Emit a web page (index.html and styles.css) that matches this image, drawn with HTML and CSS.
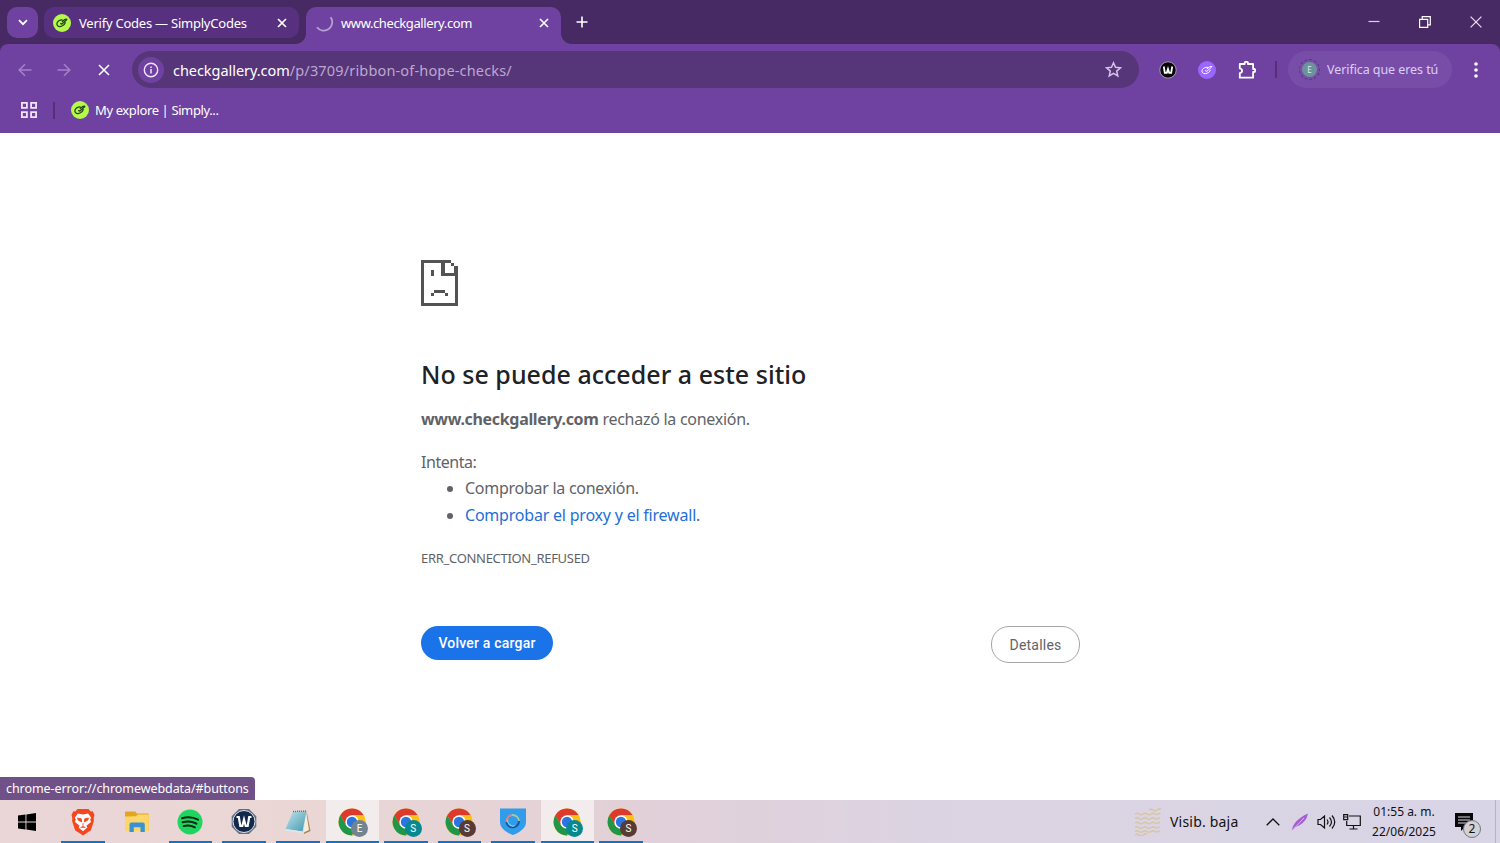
FILE: index.html
```html
<!DOCTYPE html>
<html lang="es">
<head>
  <meta charset="UTF-8">
  <meta name="viewport" content="width=device-width, initial-scale=1.0">
  <title>www.checkgallery.com</title>
  <link rel="stylesheet" href="styles.css">
</head>
<body>

  <!-- shared icons -->
  <svg class="defs" width="0" height="0">
    <symbol id="simply" viewBox="0 0 18 18">
      <circle cx="9" cy="9" r="9" fill="#b4f94c"/>
      <path d="M9.600 5.800C6.400 5.600 3.700 7.800 3.900 10.300c.2 2.200 2.900 2.800 5.100 1.700 2-.9 3.100-2.200 3.600-3.900M7.200 9.300l1.700.8 5.300-4.900M8.800 7.700l3-2.200 2.400-.3" fill="none" stroke="#26481a" stroke-width="1.300" stroke-linejoin="round"/>
    </symbol>
    <symbol id="close" viewBox="0 0 10 10">
      <path d="M1 1l8 8M9 1L1 9" fill="none" stroke="currentColor" stroke-width="1.7"/>
    </symbol>
    <symbol id="chrome" viewBox="0 0 28 28">
      <circle cx="14" cy="14" r="13.5" fill="#fbc116"/>
      <path d="M14 14L8.2 17.4 2.3 7.3A13.5 13.5 0 0 1 25.7 7.3H14z" fill="#dc3a2c"/>
      <path d="M2.3 7.3L8.2 17.4 14 20.7 19.8 17.4 14 27.5A13.5 13.5 0 0 1 2.3 7.3z" fill="#1f9648"/>
      <path d="M14 7.3h11.7A13.5 13.5 0 0 1 14 27.5l5.8-10.1z" fill="#fbc116"/>
      <circle cx="14" cy="14" r="6.7" fill="#fff"/>
      <circle cx="14" cy="14" r="5.2" fill="#2b74e2"/>
    </symbol>
  </svg>

  <header class="browser">
    <div class="tabstrip">
      <div class="tab-search">
        <svg width="10" height="7" viewBox="0 0 10 7"><path d="M1 1.2l4 4 4-4" fill="none" stroke="#fff" stroke-width="1.8"/></svg>
      </div>
      <div class="tab">
        <svg class="favicon" width="18" height="18"><use href="#simply"/></svg>
        <span class="tab-title t-verify">Verify Codes — SimplyCodes</span>
        <svg class="tab-close" width="10" height="10"><use href="#close"/></svg>
      </div>
      <div class="tab active">
        <svg class="favicon" width="18" height="18" viewBox="0 0 18 18"><path d="M15.600 3.200A7.500 7.500 0 0 1 2 13.200" fill="none" stroke="#b79fd0" stroke-width="1.8"/></svg>
        <span class="tab-title t-check">www.checkgallery.com</span>
        <svg class="tab-close" width="10" height="10"><use href="#close"/></svg>
      </div>
      <svg class="new-tab" width="12" height="12" viewBox="0 0 12 12"><path d="M6 .5v11M.5 6h11" stroke="#fff" stroke-width="1.6"/></svg>
      <div class="window-buttons">
        <svg width="12" height="12" viewBox="0 0 12 12"><path d="M.5 5.5h11" stroke="#e5c8f3" stroke-width="1.2"/></svg>
        <svg width="12" height="12" viewBox="0 0 12 12"><path d="M.6 3.3h8.1v8.1H.6zM3.2 3.3V.7h8.1v8.1H8.7" fill="none" stroke="#fff" stroke-width="1.2"/></svg>
        <svg width="12" height="12" viewBox="0 0 12 12"><path d="M.6.6l10.8 10.8M11.4.6L.6 11.4" stroke="#f2dff9" stroke-width="1.2"/></svg>
      </div>
    </div>

    <div class="toolbar">
      <div class="nav">
        <svg width="14" height="14" viewBox="0 0 14 14"><path d="M13.5 7H1.5M7 1.2L1.2 7 7 12.8" fill="none" stroke="#a581cb" stroke-width="1.5"/></svg>
        <svg width="14" height="14" viewBox="0 0 14 14"><path d="M.5 7h12M7 1.2L12.8 7 7 12.8" fill="none" stroke="#a581cb" stroke-width="1.5"/></svg>
        <svg width="12" height="12" viewBox="0 0 12 12"><path d="M1 1l10 10M11 1L1 11" stroke="#fff" stroke-width="1.6"/></svg>
      </div>
      <div class="omnibox">
        <div class="site-info">
          <svg width="16" height="16" viewBox="0 0 16 16"><circle cx="8" cy="8" r="6.7" fill="none" stroke="#f1e4fa" stroke-width="1.4"/><path d="M8 7v4.4M8 4.4v1.6" stroke="#f1e4fa" stroke-width="1.5"/></svg>
        </div>
        <span class="url"><b>checkgallery.com</b>/p/3709/ribbon-of-hope-checks/</span>
        <svg class="star" width="17" height="17" viewBox="0 0 17 17"><path d="M8.5 1.8l2 4.5 4.9.5-3.7 3.3 1.1 4.8-4.3-2.5-4.3 2.5 1.1-4.8L1.6 6.8l4.9-.5z" fill="none" stroke="#d6c2e6" stroke-width="1.5"/></svg>
      </div>
      <div class="extensions">
        <svg width="18" height="18" viewBox="0 0 18 18"><circle cx="9" cy="9" r="8.2" fill="#08080a" stroke="#b3a3c2" stroke-width=".9"/><path d="M4.8 5.5l1 6.300h2L9 8l1.200 3.800h2l1-6.300" fill="none" stroke="#fff" stroke-width="1.8"/></svg>
        <svg width="18" height="18" viewBox="0 0 18 18"><circle cx="9" cy="9" r="9" fill="#9a66ff"/><path d="M10 6.4C7 5.8 4 7.8 4 10.2c0 2.3 2.8 3.1 5.2 2 2-.9 2.8-2 3.2-3.3M7 9.6l1.8.8 5.2-4.8M8.6 8.2l3-2.4 2.6-.4" fill="none" stroke="#fff" stroke-width="1"/></svg>
        <svg class="puzzle" width="19" height="20" viewBox="0 0 19 20"><path d="M1.800 4h4.900V2.600q0-.8.800-.800h1.600q.8 0 .8.800V4h5.200v5h1.200q.8 0 .8.800v1.400q0 .8-.8.800h-1.200v5.700H1.800v-4.500q2.300-.5 2.300-2.400T1.800 8.400z" fill="none" stroke="#fff" stroke-width="1.800" stroke-linejoin="round"/></svg>
      </div>
      <span class="divider"></span>
      <div class="profile">
        <span class="profile-ring"><span class="profile-pic">E</span></span>
        <span class="profile-text">Verifica que eres tú</span>
      </div>
      <svg class="kebab" width="4" height="16" viewBox="0 0 4 16" fill="#fff"><circle cx="2" cy="2" r="1.8"/><circle cx="2" cy="8" r="1.8"/><circle cx="2" cy="14" r="1.8"/></svg>
    </div>

    <div class="bookmarks">
      <svg width="16" height="16" viewBox="0 0 16 16" fill="none" stroke="#f1e3fa" stroke-width="1.8"><path d="M.9.9h5v5h-5zM10.1.9h5v5h-5zM.9 10.1h5v5h-5zM10.1 10.1h5v5h-5z"/></svg>
      <span class="divider"></span>
      <svg class="favicon" width="18" height="18"><use href="#simply"/></svg>
      <span class="bookmark-text">My explore | Simply...</span>
    </div>
  </header>

  <main class="page">
    <div class="error">
      <svg class="sad-page" width="37" height="46" viewBox="0 0 37 46" fill="#535353">
        <path d="M0 0h30v3H24v10h12V7h1v39H0zM3 3v40h31V16H20V3z" fill-rule="evenodd"/>
        <path d="M30 3h3v3h-3zM33 6h4v8h-4z"/>
        <path d="M10 10h3v6h-3zM13 30h11v3H13zM10 33h3v3h-3zM24 33h3v3h-3z"/>
      </svg>
      <h1>No se puede acceder a este sitio</h1>
      <p class="summary"><strong>www.checkgallery.com</strong> <span>rechazó la conexión.</span></p>
      <p class="try">Intenta:</p>
      <ul>
        <li><span class="li-1">Comprobar la conexión.</span></li>
        <li><span class="li-2"><a href="#buttons">Comprobar el proxy y el firewall</a>.</span></li>
      </ul>
      <p class="code">ERR_CONNECTION_REFUSED</p>
      <div class="buttons">
        <button class="reload">Volver a cargar</button>
        <button class="details">Detalles</button>
      </div>
    </div>
    <div class="status"><span>chrome-error://chromewebdata/#buttons</span></div>
  </main>

  <footer class="taskbar">
    <div class="start">
      <svg width="18" height="18" viewBox="0 0 18 18"><path d="M0 2.600l7.500-1.100v7.100H0zM8.400 1.400L18 0v8.600H8.400zM0 9.400h7.500v7.100L0 15.400zM8.400 9.400H18V18l-9.600-1.400z"/></svg>
    </div>
    <div class="apps">
      <div class="app open">
        <svg width="24" height="28" viewBox="0 0 24 28">
          <path d="M6.5 1h11l2.200 2.500 2-.3L23.500 7l-.8 3 .2 3-3 9.200L12 27.500l-7.900-5.300L1.100 13l.2-3L.5 7l1.800-3.800 2 .3z" fill="#f4471e"/>
          <path d="M12 6.500l5.200-1 3 4.300-1 1.700.8 2.500-4.600 3.700 1 1.900L12 23.200l-4.400-3.600 1-1.900L4 14l.8-2.500-1-1.700 3-4.300z" fill="#fff"/>
          <path d="M6.500 10l3.800.8.400 3.200-3.400-1.800zM17.500 10l-3.800.8-.4 3.200 3.400-1.800zM12 15v3M9.500 19.700l2.500-1.300 2.500 1.300" fill="#f4471e" stroke="#f4471e" stroke-width=".8"/>
        </svg>
      </div>
      <div class="app">
        <svg width="24" height="22" viewBox="0 0 24 22"><path d="M0 1.200Q0 .5.700.5h9.600l1.600 2H23q.8 0 .8.800V20H0z" fill="#e2a51d"/><path d="M0 5.500l11-.2 1.600-1.800h11.200V20H0z" fill="#fcd66b"/><path d="M4.500 21v-7.500q0-2 2-2h11.300q2 0 2 2V21H15.500v-4.800h-6.700V21z" fill="#3a92d6"/></svg>
      </div>
      <div class="app open">
        <svg width="26" height="26" viewBox="0 0 26 26"><circle cx="13" cy="13" r="12.500" fill="#1ed65f"/><path d="M5 9.200c5-1.500 11.500-1 16 1.500M5.700 13.300c4.500-1.300 9.800-.8 13.700 1.400M6.500 17.100c3.800-1 8-.6 11.400 1.200" fill="none" stroke="#0c2714" stroke-width="2" stroke-linecap="round"/></svg>
      </div>
      <div class="app open">
        <svg width="26" height="27" viewBox="0 0 26 27"><path d="M8 1h10l7.300 7.300v10.400L18 26H8L.7 18.700V8.300z" fill="#606f84"/><circle cx="13" cy="13.500" r="11" fill="#12294b" stroke="#e3e6ec" stroke-width="1"/><path d="M5.500 9h2.300L9.300 18h2L13 11.500 14.700 18h2L18.200 9h2.300" fill="none" stroke="#fff" stroke-width="2.200"/></svg>
      </div>
      <div class="app open">
        <svg width="26" height="26" viewBox="0 0 26 26"><defs><linearGradient id="note" x2="1" y2="1"><stop stop-color="#c3e6ed"/><stop offset="1" stop-color="#4399b1"/></linearGradient></defs><path d="M21.500 2L25.500 22 19 25z" fill="#a8864c"/><path d="M21 2l3 19-5.500 2.500z" fill="#f4eee0"/><path d="M8 2.500L21.500 2 17.500 22.500.500 20z" fill="url(#note)"/><path d="M.500 20l17 2.500-.3 1.500L1 21.500z" fill="#dbe9eb"/><path d="M8 2.500L21.500 2" stroke="#6b7378" stroke-width="1.500" stroke-dasharray="1 1"/></svg>
      </div>
      <div class="app open focused"><svg width="28" height="28"><use href="#chrome"/></svg><span class="badge gray">E</span></div>
      <div class="app open"><svg width="28" height="28"><use href="#chrome"/></svg><span class="badge teal">S</span></div>
      <div class="app open"><svg width="28" height="28"><use href="#chrome"/></svg><span class="badge brown">S</span></div>
      <div class="app open">
        <svg width="26" height="27" viewBox="0 0 26 27"><path d="M0 .5h26V14c0 6-6 10.500-13 13C6 24.500 0 20 0 14z" fill="#319ce9"/><path d="M6.500 14a6.500 6.500 0 0 1 6-7" fill="none" stroke="#eb8571" stroke-width="1.800"/><path d="M12 7a6.500 6.500 0 0 1 7 7" fill="none" stroke="#a5c99a" stroke-width="1.800"/><path d="M19 13a6.300 6.300 0 0 1-12.500 1" fill="none" stroke="#10559e" stroke-width="2"/><path d="M8 11.500a5 5 0 0 0 7 6" fill="none" stroke="#7fd4ed" stroke-width="1.200"/></svg>
      </div>
      <div class="app open focused"><svg width="28" height="28"><use href="#chrome"/></svg><span class="badge teal">S</span></div>
      <div class="app open"><svg width="28" height="28"><use href="#chrome"/></svg><span class="badge brown">S</span></div>
    </div>

    <div class="tray">
      <svg class="haze" width="28" height="28" viewBox="0 0 28 28" fill="none" stroke="#d6c6a4" stroke-width="1.500"><path d="M15 2q2-1.500 4 0t4 0 4-1M1 6q2-1.500 4 0t4 0 4 0 4 0 4 0 5-1M1 10.500q2-1.500 4 0t4 0 4 0 4 0 4 0 5-1M1 15q2-1.500 4 0t4 0 4 0 4 0 4 0 5-1M1 19.500q2-1.500 4 0t4 0 4 0 4 0 4 0 5-1M1 23.500q2-1.500 4 0t4 0 4 0 4 0 4 0 5-1M1 27q2-1.500 4 0t4 0 4-1"/></svg>
      <span class="weather">Visib. baja</span>
      <svg class="chevron" width="14" height="8" viewBox="0 0 14 8"><path d="M.7 7.300L7 1l6.300 6.300" fill="none" stroke="#111" stroke-width="1.300"/></svg>
      <svg class="feather" width="18" height="18" viewBox="0 0 18 18"><path d="M1 17.500C1.500 11 7 5 16.800.500 16.500 6 11.500 12 4.500 14z" fill="#a65fd1"/><path d="M1 17.500L13 5" stroke="#d7b6eb" stroke-width="1"/></svg>
      <svg class="volume" width="19" height="16" viewBox="0 0 19 16" fill="none" stroke="#111" stroke-width="1.200"><path d="M1 5.500h2.500L7.500 2v12l-4-3.500H1zM10 5.500q2 2.500 0 5M12.500 3.500q4 4.500 0 9M15 1.500q5.500 6.500 0 13"/></svg>
      <svg class="network" width="18" height="16" viewBox="0 0 18 16" fill="none" stroke="#111" stroke-width="1.200"><path d="M6 2h11.300v9.500H3.700V7M.7.700h4v5h-4zM.7 3h4M10.500 11.500V15M6.500 15h8"/></svg>
      <div class="clock"><span class="time">01:55 a. m.</span><span class="date">22/06/2025</span></div>
      <div class="notes">
        <svg width="18" height="18" viewBox="0 0 18 18"><path d="M0 0h18v14h-8l-4 4v-4H0z" fill="#080808"/><path d="M3 4h12M3 7h12M3 10h8" stroke="#dcd8e4" stroke-width="1.200"/></svg>
        <span class="count">2</span>
      </div>
    </div>
    <span class="show-desktop"></span>
  </footer>

</body>
</html>
```
FILE: styles.css
```css
* {
  box-sizing: border-box;
}
body {
  margin: 0;
  height: 843px;
  overflow: hidden;
  display: flex;
  flex-direction: column;
  background: #fff;
  font-family: "Noto Sans", sans-serif;
}
svg {
  display: block;
  flex: none;
}
span {
  white-space: nowrap;
}
.defs {
  position: absolute;
}

/* browser frame */
.browser {
  height: 133px;
  background: #472963;
  color: #fff;
}
.tabstrip {
  display: flex;
  height: 44px;
  padding: 7px 18px 0 7px;
}
.tab-search {
  width: 31px;
  height: 31px;
  margin-right: 6px;
  display: flex;
  align-items: center;
  justify-content: center;
  border-radius: 10px;
  background: #6f42a1;
}
.tab {
  width: 255px;
  height: 31px;
  margin-right: 7px;
  padding: 0 12px 0 9px;
  display: flex;
  align-items: center;
  border-radius: 10px;
  background: #57317f;
}
.tab.active {
  position: relative;
  height: 37px;
  padding-bottom: 6px;
  border-radius: 10px 10px 0 0;
  background: #6f42a1;
}
/* curved feet of the active tab */
.tab.active::before,
.tab.active::after {
  content: "";
  position: absolute;
  bottom: 0;
  width: 10px;
  height: 10px;
}
.tab.active::before {
  left: -10px;
  background: radial-gradient(circle at 0 0, transparent 9.5px, #6f42a1 10px);
}
.tab.active::after {
  right: -10px;
  background: radial-gradient(circle at 100% 0, transparent 9.5px, #6f42a1 10px);
}
.tab-title {
  margin-left: 8px;
  font-size: 13px;
}
.t-verify {
  letter-spacing: -0.23px;
}
.t-check {
  letter-spacing: -0.4px;
}
.tab-close {
  margin-left: auto;
}
.new-tab {
  margin: 9px 0 0 8px;
}
.window-buttons {
  display: flex;
  gap: 39px;
  margin: 9px 0 0 auto;
}

.toolbar {
  display: flex;
  align-items: center;
  height: 51px;
  padding: 0 22px 0 18px;
  border-radius: 8px 8px 0 0;
  background: #6f42a1;
}
.nav {
  display: flex;
  align-items: center;
  gap: 25px;
  width: 114px;
}
.nav svg:last-child {
  margin-left: 2px;
}
.omnibox {
  display: flex;
  align-items: center;
  width: 1007px;
  height: 37px;
  padding: 0 17px 0 6px;
  border-radius: 19px;
  background: #573579;
}
.site-info {
  width: 26px;
  height: 26px;
  display: flex;
  align-items: center;
  justify-content: center;
  border-radius: 50%;
  background: #6f42a1;
}
.url {
  margin-left: 9px;
  font-size: 14.500px;
  letter-spacing: 0.16px;
  color: #bda7d2;
}
.url b {
  font-weight: 400;
  letter-spacing: -0.05px;
  color: #fff;
}
.star {
  margin-left: auto;
}
.extensions {
  display: flex;
  align-items: center;
  gap: 21px;
  margin-left: 20px;
}
.puzzle {
  margin-left: 1px;
}
.divider {
  width: 2px;
  height: 17px;
  background: #553079;
}
.toolbar .divider {
  margin-left: 18px;
}
.profile {
  display: flex;
  align-items: center;
  width: 164px;
  height: 37px;
  margin-left: 11px;
  padding-left: 11px;
  border-radius: 19px;
  background: #784da8;
}
.profile-ring {
  display: flex;
  padding: 2px;
  border: 1px dashed #54338a;
  border-radius: 50%;
}
.profile-pic {
  width: 15px;
  height: 15px;
  border-radius: 50%;
  background: #6c929c;
  color: #dcebf0;
  font-size: 8px;
  line-height: 15px;
  text-align: center;
}
.profile-text {
  margin-left: 7px;
  font-size: 12.500px;
  letter-spacing: -0.07px;
  color: #dacdf7;
}
.kebab {
  margin-left: auto;
}
.bookmarks {
  display: flex;
  align-items: center;
  height: 38px;
  padding: 0 0 8px 21px;
  background: #6f42a1;
}
.bookmarks .divider {
  margin: 0 16px;
}
.bookmark-text {
  margin-left: 6px;
  font-size: 13px;
  letter-spacing: -0.38px;
}

/* error page */
.page {
  position: relative;
  height: 667px;
}
.error {
  width: 659px;
  margin-left: 421px;
  padding-top: 127px;
  color: #5f6368;
  font-size: 16px;
  letter-spacing: -0.27px;
}
.error h1 {
  margin: 50px 0 0;
  height: 36px;
  line-height: 36px;
  font-size: 25px;
  font-weight: 500;
  letter-spacing: 0.03px;
  color: #202124;
  white-space: nowrap;
}
.error p,
.error li {
  margin: 0;
  height: 26px;
  line-height: 26px;
}
.error p.summary {
  margin-top: 14px;
}
.error strong {
  letter-spacing: -0.33px;
}
.error p.try {
  margin-top: 17px;
  letter-spacing: -0.45px;
}
.error ul {
  margin: 0;
  padding-left: 44px;
}
.error li {
  height: 26.500px;
}
.li-2 {
  letter-spacing: -0.21px;
}
.error a {
  color: #1f6fd6;
  text-decoration: none;
}
.error p.code {
  margin-top: 17px;
  font-size: 13px;
  letter-spacing: -0.3px;
}
.buttons {
  display: flex;
  justify-content: space-between;
  margin-top: 55px;
}
.buttons button {
  padding: 0;
  font-family: Roboto, sans-serif;
  font-size: 14px;
  letter-spacing: 0.2px;
  border-radius: 18px;
}
.reload {
  width: 132px;
  height: 34px;
  border: none;
  background: #1a73e8;
  color: #fff;
  font-weight: 500;
}
.details {
  width: 89px;
  height: 37px;
  border: 1px solid #a3a5a8;
  background: #fff;
  color: #5f6368;
}
.status {
  position: absolute;
  left: 0;
  bottom: 0;
  width: 255px;
  height: 23px;
  padding-left: 6px;
  line-height: 23px;
  border-radius: 0 4px 0 0;
  background: #705187;
  color: #fff;
  font-size: 12.500px;
  letter-spacing: -0.07px;
}

/* windows taskbar */
.taskbar {
  display: flex;
  height: 43px;
  background: linear-gradient(90deg, #ead5d7 0%, #ead7d5 20%, #e2d0d8 42%, #dcd3e1 60%, #d8d5e6 100%);
  color: #111;
}
.start {
  display: flex;
  align-items: center;
  width: 56px;
  padding: 0 0 0 18px;
}
.apps {
  display: flex;
}
.app {
  position: relative;
  display: flex;
  align-items: center;
  justify-content: center;
  width: 53.800px;
}
.app.open::after {
  content: "";
  position: absolute;
  left: 5px;
  right: 5px;
  bottom: 0;
  height: 2px;
  background: #0f73c9;
}
.app.focused {
  background: linear-gradient(#f3ecec, #f3ecec) 1px 0 no-repeat;
}
.app.focused::after {
  left: 1px;
  right: 0;
}
.badge {
  position: absolute;
  left: 26px;
  top: 20px;
  width: 17px;
  height: 17px;
  border-radius: 50%;
  color: #fff;
  font-family: Roboto, sans-serif;
  font-size: 10px;
  line-height: 17px;
  text-align: center;
}
.gray {
  background: #72848f;
}
.teal {
  background: #07898f;
}
.brown {
  background: #583b34;
}
.tray {
  display: flex;
  align-items: center;
  margin-left: auto;
}
.weather {
  width: 69px;
  margin: 0 27px 0 8px;
  font-size: 14px;
  letter-spacing: 0.2px;
}
.feather {
  margin-left: 11px;
}
.volume {
  margin-left: 8px;
}
.network {
  margin-left: 7px;
}
.clock {
  display: flex;
  flex-direction: column;
  align-items: center;
  width: 64px;
  margin-left: 11px;
  font-size: 12px;
  line-height: 20px;
}
.notes {
  position: relative;
  margin-left: 19px;
}
.count {
  position: absolute;
  left: 8px;
  top: 7px;
  width: 18px;
  height: 18px;
  border: 1px solid #77747d;
  border-radius: 50%;
  background: #d3d1d8;
  font-size: 12px;
  line-height: 16px;
  text-align: center;
}
.show-desktop {
  width: 5px;
  margin-left: 22px;
  border-left: 1px solid #b6b3c1;
}
```
